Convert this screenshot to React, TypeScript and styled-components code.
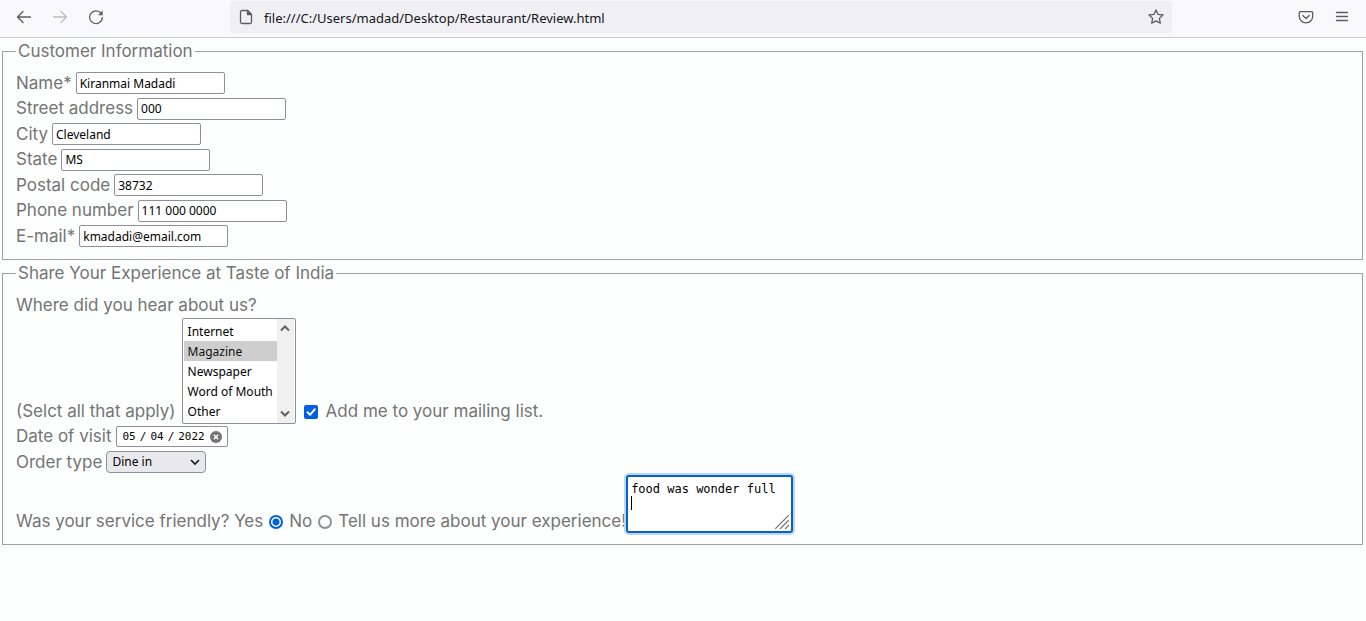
import React from "react";
import styled, { createGlobalStyle } from "styled-components";

const GlobalStyle = createGlobalStyle`
  * { box-sizing: border-box; }
  body {
    margin: 0;
    background: #fcfffe;
    color: #747474;
    font-family: Inter, "Liberation Sans", sans-serif;
    font-size: 17px;
    line-height: 1.5;
  }
`;

const controlFont = `
  font-family: "Noto Sans", sans-serif;
  font-size: 12px;
  line-height: 16px;
  color: #000;
`;

/* Browser toolbar */

const Toolbar = styled.header`
  display: flex;
  align-items: center;
  height: 38px;
  padding-bottom: 4px;
  background: #f9f9fb;
  border-bottom: 1px solid #ccc;
`;

const ToolGroup = styled.nav<{ $side: "start" | "end" }>`
  display: flex;
  gap: 4px;
  flex: none;
  width: ${(p) => (p.$side === "start" ? "230px" : "194px")};
  padding: 0 8px;
  justify-content: ${(p) => (p.$side === "start" ? "flex-start" : "flex-end")};
`;

const ToolButton = styled.button<{ $faded?: boolean }>`
  display: flex;
  align-items: center;
  justify-content: center;
  width: 32px;
  height: 32px;
  padding: 0;
  border: 0;
  background: none;
  color: ${(p) => (p.$faded ? "#bdbdc1" : "#5b5b66")};
`;

const AddressBar = styled.div`
  display: flex;
  align-items: center;
  flex: 1;
  min-width: 0;
  height: 32px;
  padding-left: 8px;
  border-radius: 4px;
  background: #f0f0f4;
  color: #5b5b66;
`;

const AddressInput = styled.input`
  flex: 1;
  min-width: 0;
  height: 32px;
  margin-left: 10px;
  padding: 2px 0 0;
  border: 0;
  outline: 0;
  background: none;
  color: #15141a;
  font-family: "Noto Sans", sans-serif;
  font-size: 13px;
  line-height: 20px;
`;

const Icon = styled.svg`
  display: block;
  width: 16px;
  height: 16px;
  flex: none;
  fill: none;
  stroke: currentColor;
  stroke-width: 1.3;
  stroke-linecap: round;
  stroke-linejoin: round;
`;

/* Form */

const ReviewForm = styled.form`
  padding-top: 1px;
`;

const Group = styled.fieldset`
  margin: 0 3px 1px 2px;
  padding: 6px 13px 10px;
  border: 1px solid #a0a0a0;
  min-width: 0;
`;

const Legend = styled.legend`
  padding: 0 2px;
`;

const Row = styled.div<{ $gap?: number; $end?: boolean }>`
  display: flex;
  align-items: ${(p) => (p.$end ? "flex-end" : "center")};
  gap: ${(p) => p.$gap ?? 4}px;
  white-space: nowrap;
`;

const TextInput = styled.input`
  ${controlFont}
  width: 149px;
  height: 22px;
  padding: 1px 3px;
  border: 1px solid #8f8f9d;
  border-radius: 2px;
  background: #fff;
`;

const ListBox = styled.div`
  display: flex;
  width: 114px;
  height: 106px;
  padding: 0 1px;
  border: 1px solid #8f8f9d;
  border-radius: 2px;
  background: #fff;
`;

const ListSelect = styled.select`
  ${controlFont}
  flex: 1;
  min-width: 0;
  height: 100px;
  margin: 2px 0;
  padding: 0;
  border: 0;
  outline: 0;
  overflow: hidden;
  background: #fff;
  scrollbar-width: none;

  option {
    height: 20px;
    min-height: 20px;
    padding: 2px 4px;
    line-height: 16px;
  }
`;

const ScrollTrack = styled.div`
  display: flex;
  flex-direction: column;
  justify-content: space-between;
  align-items: center;
  width: 17px;
  padding: 4px 0;
  background: #f0f0f0;
  color: #606060;
`;

const Chevron = styled.svg<{ $heavy?: boolean }>`
  display: block;
  width: 10px;
  height: 10px;
  fill: none;
  stroke: currentColor;
  stroke-width: ${(p) => (p.$heavy ? 1.6 : 2)};
`;

const Tick = styled.input`
  appearance: none;
  flex: none;
  width: 14px;
  height: 14px;
  margin: 0 0 5px;
  background: #fff;
  border: 2px solid #8f8f9d;

  &[type="radio"] { border-radius: 50%; }
  &[type="radio"]:checked {
    border-color: #0060df;
    background: radial-gradient(circle, #0060df 3px, #fff 4px);
  }
  &[type="checkbox"] { border-radius: 2px; }
  &[type="checkbox"]:checked {
    border-color: #0060df;
    background: #0060df;
  }
`;

const CheckWrap = styled.span`
  position: relative;
  display: flex;
  color: #fff;

  svg {
    position: absolute;
    inset: 0;
    width: 14px;
    height: 14px;
    stroke-width: 2;
    pointer-events: none;
  }
`;

const DateBox = styled.div`
  display: flex;
  align-items: center;
  justify-content: space-between;
  width: 112px;
  height: 21px;
  padding: 0 5px;
  border: 1px solid #8f8f9d;
  border-radius: 2px;
  background: #fff;
`;

const DateInput = styled.input`
  width: 88px;
  height: 18px;
  padding: 0;
  border: 0;
  outline: 0;
  background: none;
  color: #000;
  font-family: "DejaVu Sans Mono", monospace;
  font-size: 11px;
  line-height: 16px;

  &::-webkit-calendar-picker-indicator { display: none; }
  &::-webkit-datetime-edit-text { padding: 0 3px; }
`;

const ClearButton = styled.button`
  display: flex;
  padding: 0;
  border: 0;
  background: none;

  svg { display: block; width: 12px; height: 12px; }
`;

const SelectWrap = styled.div`
  position: relative;
  display: flex;
  color: #15141a;

  svg {
    position: absolute;
    right: 6px;
    top: 6px;
    pointer-events: none;
  }
`;

const DropDown = styled.select`
  ${controlFont}
  appearance: none;
  width: 100px;
  height: 22px;
  padding: 0 5px;
  border: 1px solid #8f8f9d;
  border-radius: 4px;
  background: #e9e9ed;
`;

const AreaWrap = styled.div`
  position: relative;
  display: flex;
  margin-bottom: 1px;

  svg {
    position: absolute;
    right: 4px;
    bottom: 4px;
    width: 14px;
    height: 14px;
    stroke: #707070;
    stroke-width: 1.2;
    pointer-events: none;
  }
`;

const Area = styled.textarea`
  display: block;
  width: 167px;
  height: 58px;
  padding: 5px 3px;
  border: 2px solid #0a5fc4;
  border-radius: 3px;
  outline: 0;
  box-shadow: 0 0 0 2px #b5d9f9;
  background: #fff;
  color: #000;
  resize: none;
  overflow: hidden;
  font-family: "DejaVu Sans Mono", monospace;
  font-size: 12px;
  line-height: 14px;
`;

const Caret = styled.span`
  position: absolute;
  left: 5px;
  top: 21px;
  width: 1px;
  height: 14px;
  background: #000;
`;

const fields = [
  { id: "name", label: "Name*", value: "Kiranmai Madadi" },
  { id: "street", label: "Street address", value: "000" },
  { id: "city", label: "City", value: "Cleveland" },
  { id: "state", label: "State", value: "MS" },
  { id: "postal", label: "Postal code", value: "38732" },
  { id: "phone", label: "Phone number", value: "111 000 0000" },
  { id: "email", label: "E-mail*", value: "kmadadi@email.com" },
];

const sources = ["Internet", "Magazine", "Newspaper", "Word of Mouth", "Other"];

function BrowserBar() {
  return (
    <Toolbar>
      <ToolGroup $side="start" aria-label="History">
        <ToolButton aria-label="Back">
          <Icon viewBox="0 0 16 16"><path d="M14.5 8H1.5M7 2.5 1.5 8 7 13.5" /></Icon>
        </ToolButton>
        <ToolButton aria-label="Forward" $faded>
          <Icon viewBox="0 0 16 16"><path d="M1.5 8h13M9 2.5 14.5 8 9 13.5" /></Icon>
        </ToolButton>
        <ToolButton aria-label="Reload">
          <Icon viewBox="0 0 16 16">
            <path d="M13 4.2A6.4 6.4 0 1 0 14.4 8.6" />
            <path d="M14.7 1.6v4.6h-4.6z" fill="currentColor" stroke="none" />
          </Icon>
        </ToolButton>
      </ToolGroup>
      <AddressBar>
        <Icon viewBox="0 0 16 16">
          <path d="M9.5 1.5H4A1.5 1.5 0 0 0 2.5 3v10A1.5 1.5 0 0 0 4 14.5h8a1.5 1.5 0 0 0 1.5-1.5V5.5z" />
          <path d="M9.5 1.500v4h4z" fill="currentColor" />
        </Icon>
        <AddressInput aria-label="Address" defaultValue="file:///C:/Users/madad/Desktop/Restaurant/Review.html" />
        <ToolButton aria-label="Bookmark this page">
          <Icon viewBox="0 0 16 16">
            <path d="M8 .9l2.1 4.5 4.9.6-3.6 3.400.9 4.900L8 11.900l-4.300 2.400.9-4.900L1 6l4.900-.6z" />
          </Icon>
        </ToolButton>
      </AddressBar>
      <ToolGroup $side="end" aria-label="Tools">
        <ToolButton aria-label="Save to Pocket">
          <Icon viewBox="0 0 16 16">
            <path d="M2.500 2.700h11a1.200 1.200 0 0 1 1.200 1.200v3.300a6.700 6.700 0 0 1-13.400 0V3.900a1.200 1.200 0 0 1 1.200-1.200z" />
            <path d="M4.800 6.500 8 9.500l3.200-3" />
          </Icon>
        </ToolButton>
        <ToolButton aria-label="Menu">
          <Icon viewBox="0 0 16 16"><path d="M2.500 3.500h11M2.500 7.500h11M2.500 11.500h11" /></Icon>
        </ToolButton>
      </ToolGroup>
    </Toolbar>
  );
}

export default function App() {
  return (
    <>
      <GlobalStyle />
      <BrowserBar />
      <ReviewForm>
        <Group>
          <Legend>Customer Information</Legend>
          {fields.map((f) => (
            <Row key={f.id}>
              <label htmlFor={f.id}>{f.label}</label>
              <TextInput id={f.id} defaultValue={f.value} />
            </Row>
          ))}
        </Group>
        <Group>
          <Legend>Share Your Experience at Taste of India</Legend>
          <Row>Where did you hear about us?</Row>
          <Row $gap={8} $end>
            <Row $end $gap={6}>
              <label htmlFor="source">(Selct all that apply)</label>
              <ListBox>
                <ListSelect id="source" multiple size={5} defaultValue={["Magazine"]}>
                  {sources.map((s) => <option key={s}>{s}</option>)}
                </ListSelect>
                <ScrollTrack aria-hidden="true">
                  <Chevron viewBox="0 0 10 10"><path d="M1 7.500 5 3.500l4 4" /></Chevron>
                  <Chevron viewBox="0 0 10 10"><path d="M1 2.500 5 6.500l4-4" /></Chevron>
                </ScrollTrack>
              </ListBox>
            </Row>
            <CheckWrap>
              <Tick type="checkbox" id="mailing" defaultChecked />
              <Icon viewBox="0 0 14 14"><path d="M3.500 7.300 6 9.800l4.700-5.500" /></Icon>
            </CheckWrap>
            <label htmlFor="mailing">Add me to your mailing list.</label>
          </Row>
          <Row>
            <label htmlFor="visit">Date of visit</label>
            <DateBox>
              <DateInput type="date" id="visit" defaultValue="2022-05-04" />
              <ClearButton type="button" aria-label="Clear date">
                <svg viewBox="0 0 12 12">
                  <circle cx="6" cy="6" r="6" fill="#737373" />
                  <path d="M3.800 3.800l4.400 4.400M8.200 3.800 3.800 8.200" stroke="#fff" strokeWidth="1.500" />
                </svg>
              </ClearButton>
            </DateBox>
          </Row>
          <Row>
            <label htmlFor="order">Order type</label>
            <SelectWrap>
              <DropDown id="order" defaultValue="Dine in">
                <option>Dine in</option>
              </DropDown>
              <Chevron $heavy viewBox="0 0 10 10"><path d="M1 3 5 7l4-4" /></Chevron>
            </SelectWrap>
          </Row>
          <Row $end $gap={0}>
            <Row $gap={6} $end>
              <label htmlFor="yes">Was your service friendly? Yes</label>
              <Tick type="radio" name="friendly" id="yes" defaultChecked />
              <label htmlFor="no">No</label>
              <Tick type="radio" name="friendly" id="no" />
              <label htmlFor="more">Tell us more about your experience!</label>
            </Row>
            <AreaWrap>
              <Area id="more" defaultValue={"food was wonder full\n"} />
              <Caret />
              <svg viewBox="0 0 14 14"><path d="M0 14 14 0M5 14l9-9M10 14l4-4" /></svg>
            </AreaWrap>
          </Row>
        </Group>
      </ReviewForm>
    </>
  );
}
